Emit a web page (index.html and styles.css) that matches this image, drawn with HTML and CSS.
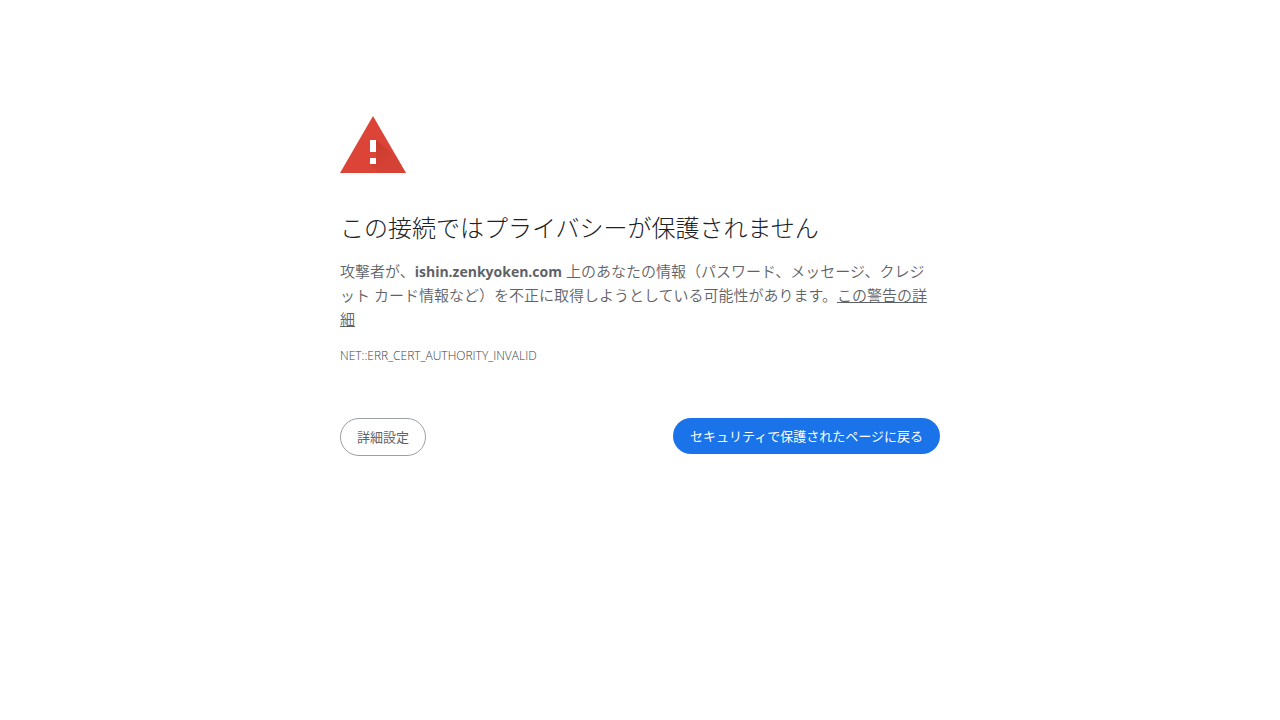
FILE: index.html
```html
<!DOCTYPE html>
<html lang="ja">
<head>
<meta charset="utf-8">
<meta name="viewport" content="width=device-width, initial-scale=1">
<title>プライバシー エラー</title>
<link rel="stylesheet" href="styles.css">
</head>
<body>
<main class="interstitial">
  <svg class="warning-icon" viewBox="0 0 66 57" role="img" aria-label="警告">
    <defs>
      <linearGradient id="shade" x1="33" y1="27" x2="50" y2="44" gradientUnits="userSpaceOnUse">
        <stop offset="0" stop-color="#b93427" stop-opacity=".6"/>
        <stop offset="1" stop-color="#b93427" stop-opacity=".16"/>
      </linearGradient>
    </defs>
    <path fill="#db4437" d="M33 0 66 57H0z"/>
    <path fill="url(#shade)" d="M36 24 56.500 40.500 66 57H39L30 48 36 42V36H30z"/>
    <path fill="#fff" d="M30 24h6v12h-6zM30 42h6v6h-6z"/>
  </svg>
  <h1 class="title">この接続ではプライバシーが保護されません</h1>
  <p class="message">攻撃者が、<strong>ishin.zenkyoken.com</strong> 上のあなたの情報（パスワード、メッセージ、クレジット カード情報など）を不正に取得しようとしている可能性があります。<a class="link" href="#">この警告の詳細</a></p>
  <p class="error-code">NET::ERR_CERT_AUTHORITY_INVALID</p>
  <div class="actions">
    <button class="button button-secondary" type="button">詳細設定</button>
    <button class="button button-primary" type="button">セキュリティで保護されたページに戻る</button>
  </div>
</main>
</body>
</html>
```
FILE: styles.css
```css
* {
  box-sizing: border-box;
}

body {
  margin: 0;
  background: #fff;
  color: #5f6368;
  font-family: "Noto Sans", "Noto Sans CJK JP", sans-serif;
  font-size: 15px;
  font-weight: 350;
  line-height: 24px;
}

.interstitial {
  max-width: 600px;
  margin: 0 auto;
  padding-top: 116px;
}

.warning-icon {
  display: block;
  width: 66px;
  height: 57px;
  margin-bottom: 40px;
}

.title {
  margin: 0 0 16px;
  color: #202124;
  font-size: 24px;
  font-weight: 300;
  line-height: 30px;
}

.message {
  margin: 0;
  padding-right: 8px;
  line-break: loose;
}

.message strong {
  font-family: "Open Sans", sans-serif;
  font-size: 14px;
  font-weight: 700;
  line-height: 16px;
}

.link {
  color: inherit;
  text-decoration: underline;
}

.error-code {
  margin: 16px 0 0;
  color: #3c4043;
  font-family: "Open Sans", sans-serif;
  font-size: 12px;
  font-weight: 300;
  line-height: 18px;
}

.actions {
  display: flex;
  flex-wrap: wrap;
  align-items: flex-start;
  justify-content: space-between;
  gap: 12px;
  margin-top: 53px;
}

.button {
  padding: 8px 16px;
  border: 1px solid #9aa0a6;
  border-radius: 20px;
  background: #fff;
  color: #5f6368;
  font: inherit;
  font-size: 13px;
  font-weight: 400;
  line-height: 20px;
  cursor: pointer;
}

.button-primary {
  padding: 8px 17px;
  border: 0;
  background: #1a73e8;
  color: #fff;
}
```
